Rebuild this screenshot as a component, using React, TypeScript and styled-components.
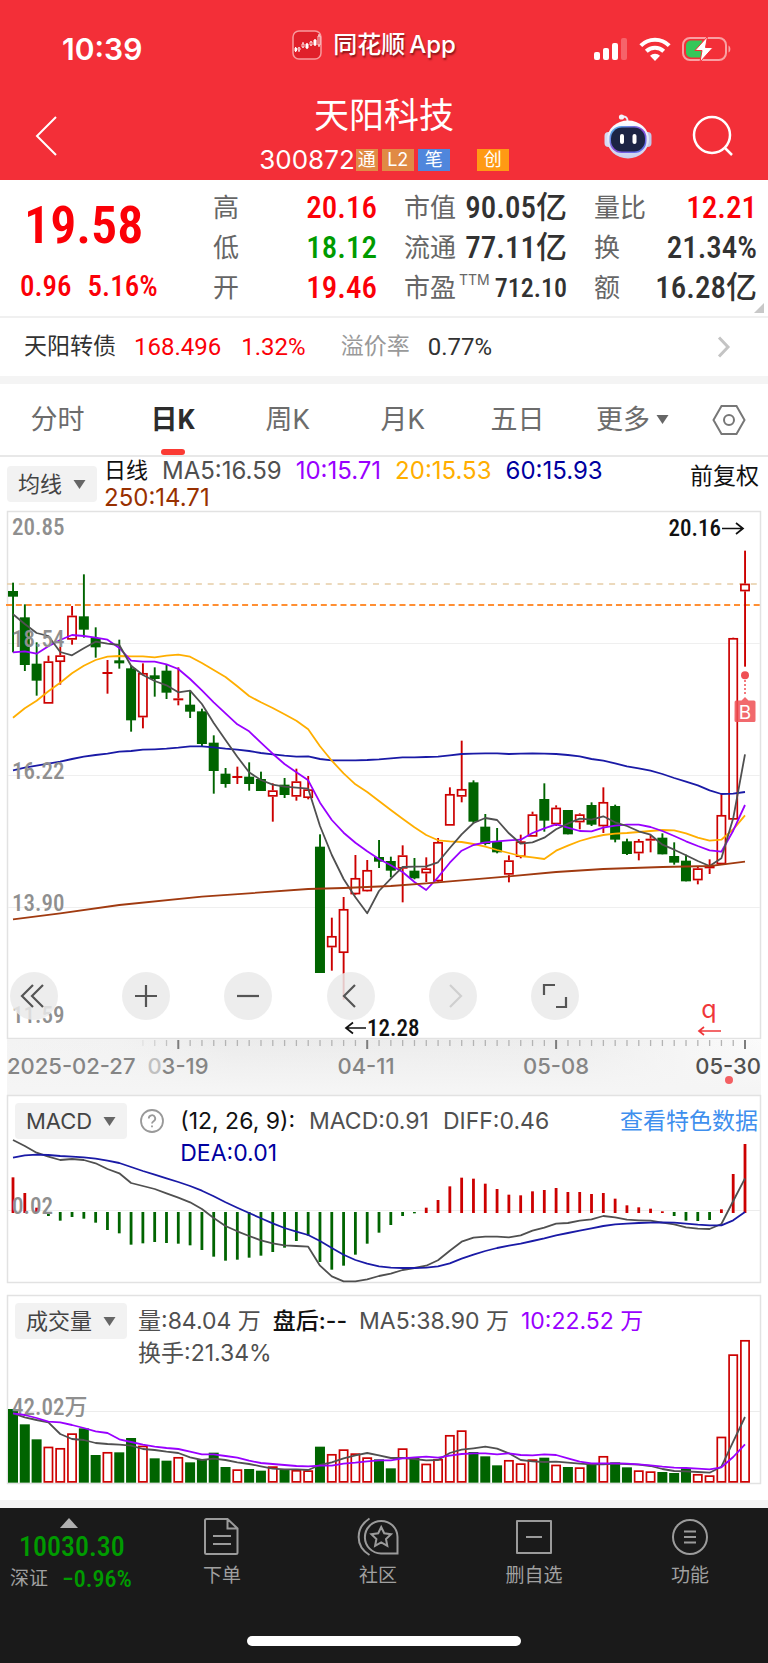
import React from "react";
import styled, { createGlobalStyle } from "styled-components";

const ui = `Inter, "Noto Sans CJK SC", sans-serif`;
const din = `"Roboto Condensed", "Noto Sans CJK SC", sans-serif`;
const roboto = `Roboto, "Noto Sans CJK SC", sans-serif`;

const color = {
  brand: "#f32f38",
  up: "#fb0007",
  down: "#009b00",
  upBar: "#cc0000",
  downBar: "#006400",
  text: "#323232",
  label: "#666666",
  line: "#e8e8e8",
  band: "#f4f4f4",
  ma5: "#505050",
  ma10: "#9900ff",
  ma20: "#ffae00",
  ma60: "#1a1aa6",
  ma250: "#a03a10",
};

const GlobalStyle = createGlobalStyle`
  *, *::before, *::after { box-sizing: border-box; }
  body { margin: 0; background: #fff; font-family: ${ui}; color: ${color.text}; }
  button { border: 0; padding: 0; background: none; font: inherit; color: inherit; cursor: pointer; }
  a { color: inherit; text-decoration: none; }
  h1, dl, dd, dt, p { margin: 0; font-weight: inherit; }
  svg { display: block; }
`;

/* ---------- market data ---------- */

type Bar = [up: 0 | 1, high: number, top: number, bottom: number, low: number];

// Plot coordinates are stored at three units to the pixel.
const U = 3;
const STEP = 732 / 62;
const xAt = (i: number) => 13 + i * STEP;

const candles: Bar[] = [
  [0, 218, 243, 260, 427], [0, 283, 322, 465, 483], [0, 397, 461, 512, 557], [1, 437, 454, 581, 581],
  [1, 410, 436, 456, 524], [1, 288, 317, 389, 404], [0, 193, 319, 359, 383], [0, 352, 384, 412, 443],
  [1, 450, 486, 492, 551], [0, 389, 451, 460, 476], [0, 466, 475, 631, 665], [1, 460, 489, 622, 655],
  [0, 472, 496, 507, 560], [0, 465, 482, 548, 567], [1, 472, 565, 571, 586], [0, 540, 584, 605, 624],
  [0, 596, 604, 702, 708], [0, 676, 698, 783, 851], [0, 774, 791, 822, 833], [1, 770, 798, 804, 822],
  [0, 757, 800, 822, 842], [0, 785, 807, 843, 843], [1, 820, 841, 860, 935], [0, 804, 824, 855, 864],
  [1, 776, 814, 860, 872], [1, 798, 838, 864, 868], [0, 973, 1010, 1389, 1389], [1, 1223, 1278, 1312, 1382],
  [1, 1161, 1197, 1329, 1469], [1, 1035, 1104, 1153, 1155], [1, 1050, 1080, 1144, 1145], [0, 990, 1041, 1055, 1074],
  [0, 1040, 1053, 1082, 1102], [1, 1006, 1036, 1076, 1177], [0, 1044, 1082, 1105, 1108], [1, 1042, 1075, 1090, 1116],
  [1, 984, 996, 1114, 1116], [1, 832, 852, 947, 947], [1, 692, 837, 860, 877], [0, 811, 817, 935, 940],
  [0, 912, 950, 1002, 1006], [0, 954, 994, 1027, 1030], [1, 1036, 1051, 1094, 1117], [1, 974, 994, 1041, 1045],
  [1, 905, 913, 980, 980], [0, 820, 867, 932, 965], [1, 886, 893, 943, 948], [0, 900, 900, 973, 973],
  [1, 910, 913, 937, 958], [0, 877, 885, 944, 948], [1, 832, 876, 949, 969], [0, 884, 888, 989, 997],
  [0, 986, 994, 1032, 1035], [1, 987, 993, 1030, 1051], [1, 975, 986, 992, 1027], [0, 970, 983, 1033, 1033],
  [0, 997, 1038, 1058, 1064], [0, 1034, 1052, 1114, 1114], [1, 1068, 1075, 1111, 1123], [1, 1048, 1067, 1075, 1092],
  [1, 852, 915, 1063, 1063], [1, 383, 384, 929, 929], [1, 122, 221, 244, 470],
];

const ma5 = [313, 342, 369, 378, 426, 436, 415, 395, 401, 405, 467, 495, 513, 526, 547, 542, 582, 639, 690, 740, 787, 810, 824, 830, 833, 836, 948, 1035, 1107, 1162, 1210, 1143, 1106, 1071, 1070, 1069, 1057, 1014, 973, 939, 924, 930, 970, 1001, 997, 983, 958, 941, 926, 929, 919, 937, 948, 964, 974, 1004, 1019, 1036, 1053, 1068, 1045, 925, 733];
const ma10 = [427, 424, 431, 409, 390, 375, 378, 383, 389, 414, 452, 455, 455, 463, 477, 507, 541, 577, 610, 643, 664, 698, 731, 762, 787, 811, 878, 930, 968, 998, 1024, 1047, 1066, 1086, 1116, 1140, 1102, 1058, 1022, 1005, 997, 994, 991, 989, 969, 955, 943, 953, 963, 964, 953, 947, 944, 944, 951, 963, 978, 994, 1008, 1021, 1025, 962, 885];
const ma20 = [623, 595, 572, 544, 518, 490, 467, 450, 440, 438, 439, 439, 442, 437, 434, 440, 459, 480, 501, 529, 558, 577, 594, 613, 632, 658, 709, 752, 790, 823, 846, 873, 900, 926, 952, 975, 991, 994, 996, 1002, 1010, 1020, 1029, 1038, 1042, 1047, 1022, 1007, 993, 983, 975, 971, 969, 966, 963, 960, 961, 970, 983, 992, 989, 958, 916];
const ma60 = [781, 773, 767, 761, 755, 747, 740, 735, 731, 725, 723, 719, 718, 716, 713, 709, 709, 712, 716, 719, 723, 729, 733, 737, 740, 739, 747, 751, 751, 751, 750, 748, 745, 742, 742, 741, 740, 736, 732, 731, 730, 730, 732, 731, 730, 731, 732, 735, 739, 747, 752, 760, 769, 775, 782, 792, 804, 815, 826, 841, 852, 851, 846];
const ma250: [number, number][] = [[0, 1228], [4, 1210], [9, 1185], [16, 1160], [25, 1137], [28, 1134], [30, 1131], [32, 1128], [35, 1120], [37, 1114], [42, 1099], [46, 1086], [50, 1077], [55, 1071], [59, 1068], [60, 1064], [62, 1055]];

const macdBars = [262, 309, 353, 378, 392, 381, 386, 398, 420, 430, 464, 460, 456, 459, 461, 466, 480, 500, 512, 509, 503, 497, 486, 473, 453, 437, 516, 539, 527, 494, 461, 428, 405, 378, 370, 353, 330, 289, 263, 266, 281, 297, 314, 316, 304, 300, 294, 306, 306, 312, 309, 326, 346, 352, 356, 364, 378, 392, 393, 390, 358, 252, 162];
const diff = [150, 168, 188, 200, 210, 207, 210, 220, 237, 250, 279, 288, 297, 310, 323, 337, 357, 384, 408, 424, 438, 451, 460, 466, 468, 470, 527, 559, 574, 574, 568, 558, 551, 540, 534, 527, 511, 482, 455, 443, 440, 440, 442, 436, 422, 413, 401, 399, 392, 388, 378, 382, 389, 391, 392, 398, 403, 412, 416, 417, 402, 333, 265];
const dea = [203, 196, 194, 195, 198, 200, 202, 206, 212, 219, 231, 243, 254, 265, 276, 288, 302, 319, 337, 353, 369, 385, 400, 414, 425, 435, 453, 474, 494, 510, 521, 529, 533, 534, 534, 533, 529, 520, 506, 494, 483, 474, 467, 461, 453, 445, 436, 429, 422, 415, 408, 403, 401, 399, 398, 397, 398, 401, 404, 406, 406, 391, 366];

const volumes = [357, 403, 448, 470, 474, 430, 415, 495, 486, 487, 444, 467, 505, 512, 501, 517, 508, 488, 531, 538, 537, 542, 529, 540, 540, 541, 470, 492, 478, 490, 502, 508, 535, 475, 503, 521, 507, 435, 421, 486, 499, 526, 510, 520, 508, 503, 524, 531, 532, 522, 498, 517, 532, 541, 544, 546, 549, 535, 552, 556, 440, 193, 150];
const volMa5 = [370, 382, 390, 397, 432, 447, 450, 459, 462, 464, 467, 477, 480, 485, 489, 502, 510, 506, 510, 517, 522, 529, 536, 538, 538, 540, 525, 517, 505, 496, 489, 496, 504, 504, 507, 511, 510, 489, 479, 475, 470, 476, 490, 510, 514, 516, 515, 518, 521, 523, 523, 521, 522, 524, 528, 537, 543, 544, 546, 548, 530, 455, 381];
const volMa10 = [370, 375, 384, 395, 397, 405, 414, 424, 429, 448, 456, 464, 470, 474, 477, 485, 493, 493, 498, 503, 512, 519, 522, 525, 528, 529, 527, 527, 521, 518, 514, 511, 511, 505, 502, 500, 503, 497, 492, 490, 490, 493, 490, 495, 496, 493, 495, 505, 515, 520, 520, 520, 521, 523, 526, 530, 533, 534, 536, 538, 532, 501, 463];

const path = (pts: [number, number][]) =>
  pts.map(([i, v], n) => `${n ? "L" : "M"}${xAt(i).toFixed(1)} ${(v / U).toFixed(1)}`).join("");
const indexed = (s: number[]) => s.map((v, i) => [i, v] as [number, number]);

/* ---------- header ---------- */

const Header = styled.header`
  background: ${color.brand};
  color: #fff;
`;
const StatusBar = styled.div`
  display: grid;
  grid-template-columns: 1fr auto 1fr;
  align-items: center;
  height: 92px;
  padding: 5px 37px 0;
`;
const Clock = styled.time`
  padding-left: 25px;
  font: 600 30px/36px ${ui};
`;
const AppBrand = styled.div`
  display: flex;
  align-items: center;
  gap: 4px;
  padding: 0 20px 7px 0;
  font: 500 24px/30px ${ui};
  text-shadow: 1px 2px 2px rgba(60, 0, 0, 0.6);
  svg { margin-right: 7px; }
`;
const StatusIcons = styled.div`
  display: flex;
  align-items: center;
  justify-content: flex-end;
  gap: 11px;
`;
const TitleBar = styled.div`
  display: grid;
  grid-template-columns: 1fr auto 1fr;
  align-items: center;
  height: 88px;
  padding: 0 34px;
`;
const TitleBlock = styled.div`
  padding-top: 1px;
`;
const StockName = styled.h1`
  font: 400 35px/42px ${ui};
  text-align: center;
`;
const CodeRow = styled.div`
  display: flex;
  align-items: center;
  height: 32px;
  margin: 8px 0 4px;
`;
const Code = styled.span`
  font: 400 26px/32px ${ui};
`;
const Badge = styled.span<{ $bg: string; $w?: number; $gap?: number }>`
  display: grid;
  place-items: center;
  width: ${(p) => p.$w ?? 32}px;
  height: 22px;
  margin-left: ${(p) => p.$gap ?? 4}px;
  background: ${(p) => p.$bg};
  font: 400 18px/22px ${ui};
`;
const HeaderActions = styled.div`
  display: flex;
  justify-content: flex-end;
  align-items: center;
  gap: 40px;
`;
const BackButton = styled.button`
  justify-self: start;
`;

/* ---------- quote ---------- */

const Quote = styled.section`
  position: relative;
  display: grid;
  grid-template-columns: 166fr 164fr 163fr 163fr;
  column-gap: 27px;
  height: 138px;
  padding: 8px 11px 0 20px;
  border-bottom: 2px solid #f0f0f0;
`;
const PriceBlock = styled.div`
  color: ${color.up};
  font-family: ${din};
`;
const Price = styled.div`
  font-size: 52px;
  font-weight: 600;
  line-height: 76px;
  padding-left: 4px;
`;
const Change = styled.div`
  display: flex;
  gap: 16px;
  font-size: 29px;
  font-weight: 500;
  line-height: 44px;
`;
const Stats = styled.dl`
  display: grid;
  grid-auto-rows: 40px;
`;
const Stat = styled.div`
  display: flex;
  justify-content: space-between;
  align-items: center;
`;
const StatLabel = styled.dt`
  font: 400 26px/40px ${ui};
  color: ${color.label};
  white-space: nowrap;
`;
const Sup = styled.sup`
  font-size: 14px;
  line-height: 14px;
  margin-left: 3px;
  vertical-align: 12px;
`;
const StatValue = styled.dd<{ $c?: string; $small?: boolean }>`
  font: 500 ${(p) => (p.$small ? 26 : 31)}px/40px ${din};
  color: ${(p) => p.$c ?? color.text};
  white-space: nowrap;
`;
const Corner = styled.span`
  position: absolute;
  right: 4px;
  bottom: 3px;
  border: solid transparent;
  border-width: 0 0 10px 10px;
  border-bottom-color: #c8c8c8;
`;

const BondRow = styled.a`
  display: flex;
  align-items: center;
  height: 58px;
  padding: 0 37px 0 24px;
  font: 400 24px/34px ${roboto};
`;
const BondName = styled.span`
  font-size: 23px;
  margin-right: 18px;
`;
const BondValue = styled.span<{ $c?: string }>`
  color: ${(p) => p.$c ?? color.text};
  margin-right: 20px;
`;
const BondLabel = styled.span`
  font-size: 23px;
  color: #999;
  margin: 0 18px 0 15px;
`;
const Spacer = styled.span`
  flex: 1;
`;
const Band = styled.div`
  height: 8px;
  background: ${color.band};
`;

/* ---------- tabs ---------- */

const Tabs = styled.nav`
  display: grid;
  grid-template-columns: repeat(6, 115fr) 78fr;
  height: 73px;
  border-bottom: 2px solid ${color.line};
`;
const Tab = styled.button<{ $active?: boolean }>`
  position: relative;
  display: flex;
  align-items: center;
  justify-content: center;
  gap: 6px;
  font: ${(p) => (p.$active ? 700 : 400)} 27px/36px ${roboto};
  color: ${(p) => (p.$active ? "#2c2c2c" : "#6c6c6c")};
  &::after {
    content: "";
    display: ${(p) => (p.$active ? "block" : "none")};
    position: absolute;
    bottom: 0;
    width: 24px;
    height: 6px;
    border-radius: 3px;
    background: #fb3a33;
  }
`;

/* ---------- charts ---------- */

const Charts = styled.main`
  padding: 0 7px;
`;
const Picker = styled.button`
  display: flex;
  align-items: center;
  justify-content: center;
  gap: 11px;
  flex: none;
  height: 36px;
  padding: 0 11px;
  border-radius: 4px;
  background: #f2f2f2;
  font: 400 22px/36px ${ui};
  color: #444;
`;
const MaRow = styled.div`
  display: flex;
  gap: 7px;
  height: 54px;
  padding-right: 2px;
`;
const MaPicker = styled(Picker)`
  margin-top: 9px;
`;
const Legend = styled.p<{ $gap: number }>`
  flex: 1;
  display: flex;
  flex-wrap: wrap;
  align-content: flex-start;
  column-gap: ${(p) => p.$gap}px;
  padding-top: 2px;
  font: 400 23px/32px ${ui};
`;
const MaLegend = styled(Legend)`
  padding: 0 30px 0 0;
  font-size: 24px;
  line-height: 27px;
`;
const Item = styled.span<{ $c: string; $w?: number }>`
  color: ${(p) => p.$c};
  font-weight: ${(p) => p.$w ?? 400};
  white-space: nowrap;
`;
const Period = styled.span`
  font-size: 22px;
  color: #111;
`;
const Adjust = styled.button`
  align-self: flex-start;
  font: 400 23px/38px ${ui};
  color: #111;
`;
const Panel = styled.section`
  display: grid;
  & > * {
    grid-area: 1 / 1;
  }
`;
const Plot = styled.svg`
  width: 100%;
  height: auto;
  overflow: visible;
`;
const PanelHead = styled.div`
  display: flex;
  align-items: flex-start;
  gap: 11px;
  padding: 8px 3px 0 8px;
`;
const PanelLink = styled.a`
  font: 400 23px/36px ${ui};
  color: #3f8fee;
  white-space: nowrap;
`;
const HelpButton = styled.button`
  padding: 6px 0;
  margin: 0 5px 0 2px;
`;
const Controls = styled.div`
  align-self: end;
  display: grid;
  grid-template-columns: 112fr 102fr 103fr 102fr 102fr 230fr;
  padding: 0 0 19px 3px;
`;
const RoundButton = styled.button`
  display: grid;
  place-items: center;
  width: 48px;
  height: 48px;
  border-radius: 50%;
  background: rgba(234, 234, 234, 0.85);
`;
const Gap = styled.div`
  height: 12px;
`;

/* ---------- bottom bar ---------- */

const BottomBar = styled.footer`
  margin-top: 16px;
  border-top: 8px solid ${color.band};
`;
const Dock = styled.div`
  background: #1a1a1a;
  color: #a0a0a0;
`;
const DockNav = styled.nav`
  display: grid;
  grid-template-columns: 144fr 156fr 156fr 156fr 156fr;
  height: 128px;
`;
const IndexItem = styled.a`
  display: flex;
  flex-direction: column;
  padding: 10px 0 0 10px;
  color: ${color.down};
  font-family: ${din};
  font-weight: 500;
`;
const Arrow = styled.span`
  width: 18px;
  margin-left: 50px;
  border: solid transparent;
  border-width: 0 9px 10px;
  border-bottom-color: #b0b0b0;
`;
const IndexValue = styled.span`
  padding-left: 9px;
  font-size: 28px;
  line-height: 38px;
`;
const IndexRow = styled.span`
  display: flex;
  align-items: center;
  gap: 14px;
  font-size: 24px;
  line-height: 26px;
`;
const IndexName = styled.span`
  font-size: 19px;
  font-weight: 400;
  color: #a0a0a0;
`;
const DockItem = styled.a`
  display: flex;
  flex-direction: column;
  align-items: center;
  gap: 5px;
  padding-top: 9px;
  font: 400 19px/28px ${ui};
`;
const HomeBar = styled.div`
  width: 274px;
  height: 10px;
  margin: 0 auto;
  border-radius: 5px;
  background: #fff;
`;
const HomeArea = styled.div`
  height: 27px;
`;

/* ---------- icons ---------- */

const Caret = () => (
  <svg width="13" height="9" viewBox="0 0 12 9" aria-hidden="true"><path d="M0 0H12L6 9Z" fill="#666" /></svg>
);

const BrandIcon = () => (
  <svg width="30" height="30" viewBox="0 0 30 30" aria-hidden="true">
    <rect x="1" y="1" width="28" height="28" rx="6" fill="#e0202a" stroke="#f79a9d" strokeWidth="1.5" />
    <g stroke="#fff" fill="#fff">
      <path d="M3.500 17v5M7 17v5M11 12v6M15 13v6M19 11v5M23 9v7M27 4v13" strokeWidth="1" />
      <path d="M3 18h1.500v3H3zM14 14h2v4h-2zM22 10h2v5h-2z" />
      <path d="M6 18h2v2H6zM10 14h2v3h-2zM18 12h2v3h-2zM26 6h2v9h-2z" fill="#e0202a" strokeWidth="0.800" />
    </g>
  </svg>
);
const Signal = () => (
  <svg width="34" height="24" viewBox="0 0 34 24" fill="#fff" aria-hidden="true">
    <rect x="0" y="15" width="6" height="8" rx="2" /><rect x="9" y="11" width="6" height="12" rx="2" />
    <rect x="18" y="6" width="6" height="17" rx="2" /><rect x="27" y="1" width="6" height="22" rx="2" opacity="0.25" />
  </svg>
);
const Wifi = () => (
  <svg width="32" height="24" viewBox="0 0 32 24" fill="none" stroke="#fff" strokeWidth="4" aria-hidden="true">
    <path d="M1.800 8.600A20 20 0 0 1 30.200 8.600" /><path d="M7.300 14.300A12.500 12.500 0 0 1 24.700 14.300" />
    <path d="M16 24l-5-5.200a7 7 0 0 1 10 0z" fill="#fff" stroke="none" />
  </svg>
);
const Battery = () => (
  <svg width="49" height="26" viewBox="0 0 49 26" aria-hidden="true">
    <rect x="1" y="2" width="43" height="22" rx="7" fill="none" stroke="#f9a0a3" strokeWidth="2" />
    <path d="M46.500 9.500c2.500 1 2.500 6 0 7z" fill="#f9a0a3" />
    <path d="M9 4.500h11v17H9a5 5 0 0 1-5-5v-7a5 5 0 0 1 5-5z" fill="#35c759" />
    <path d="M25.500 0.500L13 14.500h7L18 26 31 11.500H23.500z" fill="#fff" stroke={color.brand} strokeWidth="1" />
  </svg>
);
const Robot = () => (
  <svg width="48" height="45" viewBox="0 0 48 45" aria-hidden="true">
    <defs>
      <linearGradient id="shell" x1="0" y1="0" x2="0" y2="1"><stop offset="0" stopColor="#fff" /><stop offset="1" stopColor="#c9cfee" /></linearGradient>
      <linearGradient id="rim" x1="0" y1="0" x2="1" y2="1"><stop offset="0" stopColor="#4ac4ee" /><stop offset="0.500" stopColor="#8a4bd8" /><stop offset="1" stopColor="#4f7cf0" /></linearGradient>
    </defs>
    <path d="M17 2.500c5-.500 7 1 6.500 6" stroke="#e9ebf8" strokeWidth="2" fill="none" />
    <circle cx="17.500" cy="3" r="2.600" fill="#f3f4fb" />
    <rect x="0.500" y="18" width="8" height="15" rx="4" fill="#d5d9f2" /><rect x="39.500" y="18" width="8" height="15" rx="4" fill="#c3c8ea" />
    <ellipse cx="24" cy="25.500" rx="21" ry="19" fill="url(#shell)" />
    <rect x="5.500" y="12" width="37" height="27" rx="12" fill="url(#rim)" />
    <rect x="7" y="13.500" width="34" height="24" rx="11" fill="#1c2444" />
    <rect x="16" y="20" width="4" height="10" rx="2" fill="#fff" /><rect x="28.500" y="20" width="4" height="10" rx="2" fill="#fff" />
  </svg>
);

const dockIcons = [
  <svg key="order" width="40" height="40" viewBox="0 0 40 40"><path d="M3 3.500q0-1.500 1.500-1.500H25.500L35.500 11.500V35.500q0 1.500-1.500 1.500H4.500Q3 37 3 35.500ZM25.500 2V11.500H35.500M11 19h18M11 27h18" /></svg>,
  <svg key="community" width="44" height="40" viewBox="0 0 44 40"><path d="M13.500 1.500C-1 11-1 29 13.500 38M25 36.500A16.300 16.300 0 1 1 41.500 20V36.500ZM25.200 10l3 6.300 6.800.9-5 4.800 1.300 6.900-6.100-3.400-6.100 3.400 1.300-6.900-5-4.800 6.800-.9Z" /></svg>,
  <svg key="remove" width="40" height="40" viewBox="0 0 40 40"><path d="M3 4h34v32H3ZM12 20h16" strokeLinejoin="round" /></svg>,
  <svg key="more" width="40" height="40" viewBox="0 0 40 40"><circle cx="20" cy="20" r="17" /><path d="M14 14.500h12M14 20h12M14 25.500h12" /></svg>,
];
const dockLabels = ["下单", "社区", "删自选", "功能"];
const DockGlyph = styled.span`
  svg { fill: none; stroke: #9b9b9b; stroke-width: 2; }
`;

const controlIcons: [string, string, string][] = [
  ["快退", "M23 13L12 24L23 35M33 13L22 24L33 35", "#555"],
  ["放大", "M24 13V35M13 24H35", "#555"],
  ["缩小", "M13 24H35", "#555"],
  ["左移", "M28 13L17 24L28 35", "#555"],
  ["右移", "M21 13L32 24L21 35", "#cfcfcf"],
  ["全屏", "M13 23V13H24M25 35H35V25", "#555"],
];

/* ---------- chart drawings ---------- */

const Candles = () => (
  <g>
    {candles.map(([up, h, t, b, l], i) => {
      const x = xAt(i);
      if (!up)
        return (
          <g key={i} fill={color.downBar}>
            <rect x={x - 0.9} y={h / U} width={1.9} height={(l - h) / U} />
            <rect x={x - 5} y={t / U} width={10} height={(b - t) / U} />
          </g>
        );
      const flat = b - t < 10;
      return (
        <g key={i} fill={color.upBar}>
          <rect x={x - 0.9} y={h / U} width={1.9} height={(t - h) / U} />
          <rect x={x - 0.9} y={b / U} width={1.9} height={(l - b) / U} />
          {flat ? (
            <rect x={x - 5} y={t / U} width={10} height={(b - t) / U} />
          ) : (
            <rect x={x - 4.1} y={t / U + 0.8} width={8.2} height={(b - t) / U - 1.6} fill="none" stroke={color.upBar} strokeWidth={1.7} />
          )}
        </g>
      );
    })}
  </g>
);

const PriceChart = () => (
  <Plot viewBox="7 1 754 528" fontFamily={din} fontSize={23}>
    <rect x="7.500" y="1.500" width="753" height="527" fill="#fff" stroke="#e2e2e2" strokeWidth="1.500" />
    <path d="M8 133.500H760M8 265.500H760M8 397.500H760" stroke="#efefef" />
    <path d="M7 74H761" stroke="#e6cda6" strokeWidth="1.700" strokeDasharray="6 5.806" />
    <path d="M6 95H761" stroke="#ff8f33" strokeWidth="2" strokeDasharray="6 3.838" />
    <Candles />
    <g fill="none" strokeWidth="1.800" strokeLinejoin="round">
      <path d={path(indexed(ma60))} stroke={color.ma60} />
      <path d={path(indexed(ma20))} stroke={color.ma20} />
      <path d={path(indexed(ma10))} stroke={color.ma10} />
      <path d={path(indexed(ma5))} stroke={color.ma5} />
      <path d={path(ma250)} stroke={color.ma250} />
    </g>
    <g fill="#8f8f8f" fontWeight="500">
      <text x="12" y="25">20.85</text><text x="12" y="137">18.54</text><text x="12" y="269">16.22</text>
      <text x="12" y="401">13.90</text><text x="12" y="513">11.59</text>
    </g>
    <g fill="#111" fontWeight="500">
      <text x="721" y="26" textAnchor="end">20.16</text><text x="367" y="526">12.28</text>
    </g>
    <path d="M722 18.500H743M736 13l7 5.500-7 5.500M366 518H346M353 512.500l-7 5.500 7 5.500" fill="none" stroke="#111" strokeWidth="1.700" />
    <g fill="#ef4f54">
      <circle cx="745" cy="165.300" r="4" />
      <path d="M745 170V184" stroke="#ef4f54" strokeWidth="1.500" strokeDasharray="2 2" />
      <path d="M734.600 192q0-1.500 1.500-1.500H741.500L745 187L748.500 190.500H754q1.500 0 1.500 1.500V210.500q0 1.500-1.500 1.500H736q-1.500 0-1.500-1.500Z" opacity="0.850" />
      <text x="745" y="208.500" textAnchor="middle" fill="#fff" fontFamily={ui} fontSize="19">B</text>
    </g>
    <text x="709" y="508" textAnchor="middle" fill="#f0373a" fontFamily={ui} fontSize="25">q</text>
    <path d="M721 521H699M704 517l-5 4 5 4" fill="none" stroke="#f0373a" strokeWidth="1.700" />
  </Plot>
);

const Axis = () => (
  <Plot viewBox="7 0 754 56" fontFamily={ui} fontSize={22} fontWeight={500}>
    <defs>
      <linearGradient id="axisX" x1="0" x2="1" y1="0" y2="0">
        <stop offset="0" stopColor="#f3f3f3" /><stop offset="0.150" stopColor="#f2f2f2" />
        <stop offset="0.300" stopColor="#ebebeb" /><stop offset="0.750" stopColor="#ededed" /><stop offset="1" stopColor="#fbfbfb" />
      </linearGradient>
      <linearGradient id="axisY" x1="0" x2="0" y1="0" y2="1">
        <stop offset="0" stopColor="#f5f5f5" stopOpacity="0" /><stop offset="0.900" stopColor="#f5f5f5" />
      </linearGradient>
    </defs>
    <rect x="7" width="754" height="56" fill="url(#axisX)" />
    <rect x="7" width="754" height="56" fill="url(#axisY)" />
    {candles.map((_, i) => {
      if (i < 11) return null;
      const major = i % 16 === 14;
      return (
        <rect key={i} x={xAt(i) - (major ? 1 : 0.6)} y="1" width={major ? 2 : 1.3} height={major ? 9 : 6}
          fill={major ? "#7d7d7d" : "#b4b4b4"} opacity={i < 14 ? (i - 10) * 0.25 : 1} />
      );
    })}
    <g fill="#858585">
      <text x="7" y="35">2025-02-27</text>
      <text x="178" y="35" textAnchor="middle"><tspan fill="#c0c0c0">0</tspan>3-19</text>
      <text x="366" y="35" textAnchor="middle">04-11</text>
      <text x="556" y="35" textAnchor="middle">05-08</text>
      <text x="761" y="35" textAnchor="end" fill="#505050">05-30</text>
    </g>
    <circle cx="729" cy="41" r="4" fill="#f35f62" />
  </Plot>
);

const MacdChart = () => (
  <Plot viewBox="7 5 754 188">
    <rect x="7.500" y="5.500" width="753" height="187" fill="none" stroke="#e2e2e2" strokeWidth="1.500" />
    <path d="M8 120.500H760" stroke="#ececec" />
    {macdBars.map((v, i) => {
      const up = v < 367;
      return <rect key={i} x={xAt(i) - 1.4} y={(up ? v : 366) / U} width={2.8} height={(up ? 369 - v : v - 366) / U} fill={up ? color.upBar : color.downBar} />;
    })}
    <text x="12" y="124" fontFamily={din} fontSize="23" fontWeight="500" fill="#8f8f8f">0.02</text>
    <g fill="none" strokeWidth="1.800" strokeLinejoin="round">
      <path d={path(indexed(diff))} stroke={color.ma5} />
      <path d={path(indexed(dea))} stroke={color.ma60} />
    </g>
  </Plot>
);

const VolumeChart = () => (
  <Plot viewBox="7 5 754 189">
    <rect x="7.500" y="5.500" width="753" height="188" fill="none" stroke="#e2e2e2" strokeWidth="1.500" />
    <path d="M8 121.500H760" stroke="#ececec" />
    {volumes.map((v, i) =>
      candles[i][0] ? (
        <rect key={i} x={xAt(i) - 4.1} y={v / U + 0.8} width={8.2} height={(578 - v) / U - 1.6} fill="none" stroke={color.upBar} strokeWidth={1.7} />
      ) : (
        <rect key={i} x={xAt(i) - 5} y={v / U} width={10} height={(578 - v) / U} fill={color.downBar} />
      )
    )}
    <text x="12" y="125" fontFamily={din} fontSize="23" fontWeight="500" fill="#8f8f8f">42.02万</text>
    <g fill="none" strokeWidth="1.800" strokeLinejoin="round">
      <path d={path(indexed(volMa5))} stroke={color.ma5} />
      <path d={path(indexed(volMa10))} stroke={color.ma10} />
    </g>
  </Plot>
);

/* ---------- page ---------- */

const stats: { label: React.ReactNode; value: string; c?: string; small?: boolean }[][] = [
  [
    { label: "高", value: "20.16", c: color.up },
    { label: "低", value: "18.12", c: color.down },
    { label: "开", value: "19.46", c: color.up },
  ],
  [
    { label: "市值", value: "90.05亿" },
    { label: "流通", value: "77.11亿" },
    { label: <>市盈<Sup>TTM</Sup></>, value: "712.10", small: true },
  ],
  [
    { label: "量比", value: "12.21", c: color.up },
    { label: "换", value: "21.34%" },
    { label: "额", value: "16.28亿" },
  ],
];
const tabs = ["分时", "日K", "周K", "月K", "五日"];

export default function App() {
  return (
    <>
      <GlobalStyle />
      <Header>
        <StatusBar>
          <Clock>10:39</Clock>
          <AppBrand><BrandIcon /><span>同花顺</span><span>App</span></AppBrand>
          <StatusIcons><Signal /><Wifi /><Battery /></StatusIcons>
        </StatusBar>
        <TitleBar>
          <BackButton aria-label="返回">
            <svg width="24" height="42" viewBox="0 0 24 42" fill="none" stroke="#fff" strokeWidth="2"><path d="M22 2L3 21L22 40" /></svg>
          </BackButton>
          <TitleBlock>
            <StockName>天阳科技</StockName>
            <CodeRow>
              <Code>300872</Code>
              <Badge $bg="#e08a45" $w={22} $gap={1}>通</Badge>
              <Badge $bg="#e08a45">L2</Badge>
              <Badge $bg="#4f86dc">笔</Badge>
              <Badge $bg="#ff9a14" $gap={27}>创</Badge>
            </CodeRow>
          </TitleBlock>
          <HeaderActions>
            <button aria-label="智能助手"><Robot /></button>
            <button aria-label="搜索">
              <svg width="42" height="42" viewBox="0 0 42 42" fill="none" stroke="#fff" strokeWidth="2.500"><circle cx="20" cy="20" r="18" /><path d="M33 33L40 40" /></svg>
            </button>
          </HeaderActions>
        </TitleBar>
      </Header>

      <Quote>
        <PriceBlock>
          <Price>19.58</Price>
          <Change><span>0.96</span><span>5.16%</span></Change>
        </PriceBlock>
        {stats.map((col, i) => (
          <Stats key={i}>
            {col.map((s, j) => (
              <Stat key={j}>
                <StatLabel>{s.label}</StatLabel>
                <StatValue $c={s.c} $small={s.small}>{s.value}</StatValue>
              </Stat>
            ))}
          </Stats>
        ))}
        <Corner />
      </Quote>

      <BondRow href="#bond">
        <BondName>天阳转债</BondName>
        <BondValue $c={color.up}>168.496</BondValue>
        <BondValue $c={color.up}>1.32%</BondValue>
        <BondLabel>溢价率</BondLabel>
        <BondValue>0.77%</BondValue>
        <Spacer />
        <svg width="14" height="22" viewBox="0 0 14 22" fill="none" stroke="#c4c4c4" strokeWidth="3"><path d="M2 1.500L11 11L2 20.500" /></svg>
      </BondRow>
      <Band />

      <Tabs>
        {tabs.map((t) => <Tab key={t} $active={t === "日K"}>{t}</Tab>)}
        <Tab>更多<Caret /></Tab>
        <Tab aria-label="设置">
          <svg width="34" height="32" viewBox="0 0 34 32" fill="none" stroke="#777" strokeWidth="2"><path d="M9.500 2H24.500L32.500 16L24.500 30H9.500L1.500 16Z" /><circle cx="17" cy="16" r="5" /></svg>
        </Tab>
      </Tabs>

      <Charts>
        <MaRow>
          <MaPicker>均线<Caret /></MaPicker>
          <MaLegend $gap={14}>
            <Period>日线</Period>
            <Item $c={color.ma5}>MA5:16.59</Item>
            <Item $c={color.ma10}>10:15.71</Item>
            <Item $c={color.ma20}>20:15.53</Item>
            <Item $c="#0000a0">60:15.93</Item>
            <Item $c="#983000">250:14.71</Item>
          </MaLegend>
          <Adjust>前复权</Adjust>
        </MaRow>
        <Panel>
          <PriceChart />
          <Controls>
            {controlIcons.map(([label, d, stroke]) => (
              <RoundButton key={label} aria-label={label}>
                <svg width="48" height="48" viewBox="0 0 48 48" fill="none" stroke={stroke} strokeWidth="2.200"><path d={d} /></svg>
              </RoundButton>
            ))}
          </Controls>
        </Panel>
        <Axis />
        <Panel>
          <MacdChart />
          <PanelHead>
            <Picker>MACD<Caret /></Picker>
            <HelpButton aria-label="指标说明">
              <svg width="24" height="24" viewBox="0 0 24 24" fill="none" stroke="#999" strokeWidth="1.800"><circle cx="12" cy="12" r="11" /><path d="M8.800 9.500a3.200 3.200 0 1 1 4.800 2.700c-1 .700-1.600 1.200-1.600 2.400M12 16.500v1.800" /></svg>
            </HelpButton>
            <Legend $gap={14}>
              <Item $c="#111">(12, 26, 9):</Item>
              <Item $c={color.ma5}>MACD:0.91</Item>
              <Item $c={color.ma5}>DIFF:0.46</Item>
              <Item $c="#0000a0">DEA:0.01</Item>
            </Legend>
            <PanelLink href="#featured">查看特色数据</PanelLink>
          </PanelHead>
        </Panel>
        <Gap />
        <Panel>
          <VolumeChart />
          <PanelHead>
            <Picker>成交量<Caret /></Picker>
            <Legend $gap={12}>
              <Item $c={color.ma5}>量:84.04 万</Item>
              <Item $c="#111" $w={500}>盘后:--</Item>
              <Item $c={color.ma5}>MA5:38.90 万</Item>
              <Item $c={color.ma10}>10:22.52 万</Item>
              <Item $c={color.ma5}>换手:21.34%</Item>
            </Legend>
          </PanelHead>
        </Panel>
      </Charts>

      <BottomBar>
        <Dock>
          <DockNav>
            <IndexItem href="#index">
              <Arrow />
              <IndexValue>10030.30</IndexValue>
              <IndexRow><IndexName>深证</IndexName>−0.96%</IndexRow>
            </IndexItem>
            {dockLabels.map((label, i) => (
              <DockItem key={label} href={`#${i}`}>
                <DockGlyph>{dockIcons[i]}</DockGlyph>
                {label}
              </DockItem>
            ))}
          </DockNav>
          <HomeArea><HomeBar /></HomeArea>
        </Dock>
      </BottomBar>
    </>
  );
}
